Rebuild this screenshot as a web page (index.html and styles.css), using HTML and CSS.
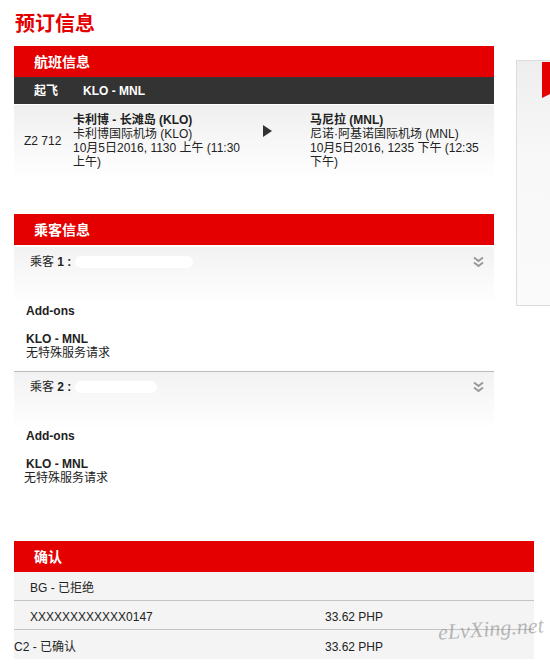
FILE: index.html
```html
<!DOCTYPE html>
<html lang="zh">
<head>
<meta charset="utf-8">
<title>预订信息</title>
<link rel="stylesheet" href="styles.css">
</head>
<body>
<div class="page">
  <h1 class="title">预订信息</h1>
  <div class="top">
    <div class="main">
      <section class="section flight-section">
        <div class="bar-red">航班信息</div>
        <div class="bar-dark"><span class="dep">起飞</span><span>KLO - MNL</span></div>
        <div class="flight-row">
          <div class="fno">Z2 712</div>
          <div class="place">
            <div class="b">卡利博 - 长滩岛 (KLO)</div>
            <div>卡利博国际机场 (KLO)</div>
            <div>10月5日2016, 1130 上午 (11:30 上午)</div>
          </div>
          <div class="arrow"><svg width="9" height="12" viewBox="0 0 9 12"><polygon points="0,0 9,6 0,12" fill="#333"/></svg></div>
          <div class="place">
            <div class="b">马尼拉 (MNL)</div>
            <div>尼诺·阿基诺国际机场 (MNL)</div>
            <div>10月5日2016, 1235 下午 (12:35 下午)</div>
          </div>
        </div>
      </section>

      <section class="section pax-section">
        <div class="bar-red">乘客信息</div>
        <div class="pax-list">
          <div class="pax pax-first">
            <div class="pax-head">
              <span>乘客 <b>1 :</b> <span class="blob blob1"></span></span>
              <svg class="chev" width="11" height="12" viewBox="0 0 11 12"><path d="M1 1.5 L5.5 5 L10 1.5 M1 6.5 L5.5 10 L10 6.5" fill="none" stroke="#999" stroke-width="2"/></svg>
            </div>
            <div class="b">Add-ons</div>
            <div class="route b">KLO - MNL</div>
            <div>无特殊服务请求</div>
          </div>
          <div class="pax">
            <div class="pax-head">
              <span>乘客 <b>2 :</b> <span class="blob blob2"></span></span>
              <svg class="chev" width="11" height="12" viewBox="0 0 11 12"><path d="M1 1.5 L5.5 5 L10 1.5 M1 6.5 L5.5 10 L10 6.5" fill="none" stroke="#999" stroke-width="2"/></svg>
            </div>
            <div class="b">Add-ons</div>
            <div class="route b">KLO - MNL</div>
            <div class="shift">无特殊服务请求</div>
          </div>
        </div>
      </section>
    </div>
    <aside class="aside">
      <svg class="ribbon" width="10" height="36" viewBox="0 0 10 36"><polygon points="0,0 10,0 10,31 0,36" fill="#e40000"/></svg>
    </aside>
  </div>

  <section class="confirm">
    <div class="bar-red">确认</div>
    <div class="c-row"><span class="indent">BG - 已拒绝</span><span></span></div>
    <div class="c-row"><span class="indent">XXXXXXXXXXXX0147</span><span>33.62 PHP</span></div>
    <div class="c-row last"><span>C2 - 已确认</span><span>33.62 PHP</span></div>
  </section>
  <div class="watermark">eLvXing.net</div>
</div>
</body>
</html>
```

FILE: styles.css
```css
html, body {
  margin: 0;
  padding: 0;
  overflow: hidden;
  background: #fff;
}
body {
  font-family: "Liberation Sans", "Noto Sans CJK SC", sans-serif;
  font-size: 12px;
  line-height: 14px;
  color: #222;
}
.page {
  position: relative;
  padding-left: 14px;
  height: 671px;
}
.title {
  margin: 0 0 8px 1px;
  padding-top: 11px;
  font-size: 20px;
  line-height: 27px;
  font-weight: bold;
  color: #e40000;
}
.top {
  display: flex;
  align-items: flex-start;
  gap: 22px;
}
.main {
  width: 480px;
  flex: none;
}
.aside {
  flex: none;
  width: 60px;
  height: 246px;
  margin-top: 14px;
  border: 1px solid #ddd;
  background: linear-gradient(#eeeeee, #f8f8f8 40%, #fafafa);
  box-sizing: border-box;
}
.ribbon {
  display: block;
  margin: 1px 0 0 25px;
}
.bar-red {
  height: 31px;
  line-height: 33px;
  padding-left: 20px;
  background: #e40000;
  color: #fff;
  font-size: 14px;
  font-weight: bold;
}
.bar-dark {
  height: 27px;
  line-height: 28px;
  padding-left: 20px;
  background: #333;
  color: #fff;
  font-weight: bold;
  display: flex;
  gap: 25px;
}
.flight-row {
  margin-top: 1px;
  padding: 8px 0 10px 10px;
  display: grid;
  grid-template-columns: 49px 175px 62px 175px;
  align-items: center;
  background: linear-gradient(#efefef, #ffffff);
}
.flight-section {
  margin-bottom: 35px;
}
.b { font-weight: bold; }
.arrow {
  align-self: start;
  padding: 12px 0 0 15px;
  line-height: 0;
}
.pax-list {
  padding-top: 2px;
}
.pax {
  padding: 0 12px 11px;
}
.pax-first {
  border-bottom: 1px solid #bbb;
}
.pax-head {
  height: 57px;
  box-sizing: border-box;
  margin: 0 -12px;
  padding: 8px 10px 0 16px;
  display: flex;
  justify-content: space-between;
  align-items: flex-start;
  background: linear-gradient(#f2f2f2, #ffffff);
}
.chev {
  margin-top: 1px;
}
.blob {
  display: inline-block;
  height: 12px;
  background: #fff;
  border-radius: 6px;
  vertical-align: -2px;
}
.blob1 { width: 118px; }
.blob2 { width: 82px; }
.route {
  margin-top: 14px;
}
.shift {
  margin-left: -2px;
}
.pax-section {
  margin-bottom: 45px;
}
.confirm {
  width: 520px;
}
.c-row {
  display: grid;
  grid-template-columns: 311px 1fr;
  height: 28px;
  align-items: center;
  background: #f4f4f4;
  border-bottom: 1px solid #c4c4c4;
}
.c-row span {
  padding-top: 4px;
}
.c-row.last {
  border-bottom: none;
  height: 29px;
}
.indent {
  padding-left: 16px;
}
.watermark {
  position: absolute;
  left: 438px;
  top: 614px;
  font-family: "Liberation Serif", "DejaVu Serif", serif;
  font-style: italic;
  font-size: 22px;
  line-height: 30px;
  color: rgba(120, 120, 120, 0.5);
  transform: rotate(-4deg);
  pointer-events: none;
}
```
